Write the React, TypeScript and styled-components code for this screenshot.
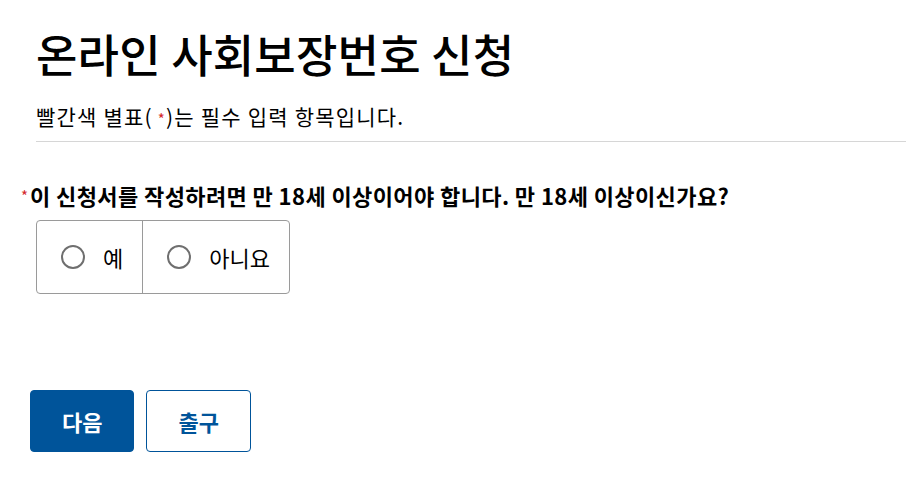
import React, { FC, useState } from "react";
import styled, { createGlobalStyle } from "styled-components";

const GlobalStyle = createGlobalStyle`
  html, body {
    margin: 0;
    padding: 0;
    background: #fff;
  }
  body {
    font-family: "Noto Sans CJK KR", "Noto Sans", sans-serif;
    color: #000;
  }
`;

const Page = styled.main`
  display: flex;
  flex-direction: column;
  padding: 24px 0 0 36px;
`;

const Title = styled.h1`
  margin: 0;
  font-size: 45px;
  font-weight: 500;
  line-height: 60px;
  letter-spacing: 0.2px;
`;

const Notice = styled.p`
  margin: 17px 0 0;
  font-size: 21px;
  line-height: 30px;
  letter-spacing: 1.2px;
  padding-bottom: 7px;
  border-bottom: 1px solid #d6d6d6;
`;

const Star = styled.span`
  color: #d4282b;
  font-size: 15px;
  margin: 0 0 0 5px;
  vertical-align: 0;
`;

const Field = styled.fieldset`
  border: 0;
  margin: 38px 0 0;
  padding: 0;
  min-width: 0;
`;

const Legend = styled.legend`
  position: relative;
  margin-left: -6px;
  padding: 0;
  font-size: 22px;
  font-weight: 700;
  line-height: 30px;
  letter-spacing: 0.4px;
`;

const LegendStar = styled.span`
  position: absolute;
  left: -9px;
  top: 1px;
  color: #d4282b;
  font-size: 15px;
  font-weight: 400;
`;

const Choices = styled.div`
  display: flex;
  width: max-content;
  margin-top: 10px;
  border: 1px solid #9a9a9a;
  border-radius: 4px;
`;

const Choice = styled.label`
  display: flex;
  align-items: center;
  gap: 18px;
  height: 72px;
  padding: 0 19px 0 24px;
  font-size: 22px;
  cursor: pointer;

  & + & {
    border-left: 1px solid #9a9a9a;
  }
`;

const Dot = styled.span<{ $checked: boolean }>`
  width: 20px;
  height: 20px;
  border: 2px solid #6f6f6f;
  border-radius: 50%;
  display: grid;
  place-items: center;

  &::after {
    content: "";
    width: 12px;
    height: 12px;
    border-radius: 50%;
    background: ${(p) => (p.$checked ? "#00549a" : "transparent")};
  }
`;

const HiddenInput = styled.input`
  position: absolute;
  opacity: 0;
  pointer-events: none;
`;

const Actions = styled.div`
  display: flex;
  gap: 12px;
  margin: 96px 0 0 -6px;
`;

const Button = styled.button<{ $primary?: boolean }>`
  height: 62px;
  padding: 0 31px;
  border-radius: 4px;
  border: 1px solid #00549a;
  background: ${(p) => (p.$primary ? "#00549a" : "#fff")};
  color: ${(p) => (p.$primary ? "#fff" : "#00549a")};
  font-family: inherit;
  font-size: 22px;
  font-weight: 700;
  cursor: pointer;
`;

const options = ["예", "아니요"];

const App: FC = () => {
  const [value, setValue] = useState<string | null>(null);

  return (
    <>
      <GlobalStyle />
      <Page>
        <Title>온라인 사회보장번호 신청</Title>
        <Notice>
          빨간색 별표(<Star>*</Star>)는 필수 입력 항목입니다.
        </Notice>
        <Field>
          <Legend>
            <LegendStar>*</LegendStar>이 신청서를 작성하려면 만 18세 이상이어야
            합니다. 만 18세 이상이신가요?
          </Legend>
          <Choices>
            {options.map((opt) => (
              <Choice key={opt}>
                <HiddenInput
                  type="radio"
                  name="age"
                  checked={value === opt}
                  onChange={() => setValue(opt)}
                />
                <Dot $checked={value === opt} />
                {opt}
              </Choice>
            ))}
          </Choices>
        </Field>
        <Actions>
          <Button $primary>다음</Button>
          <Button>출구</Button>
        </Actions>
      </Page>
    </>
  );
};

export default App;
